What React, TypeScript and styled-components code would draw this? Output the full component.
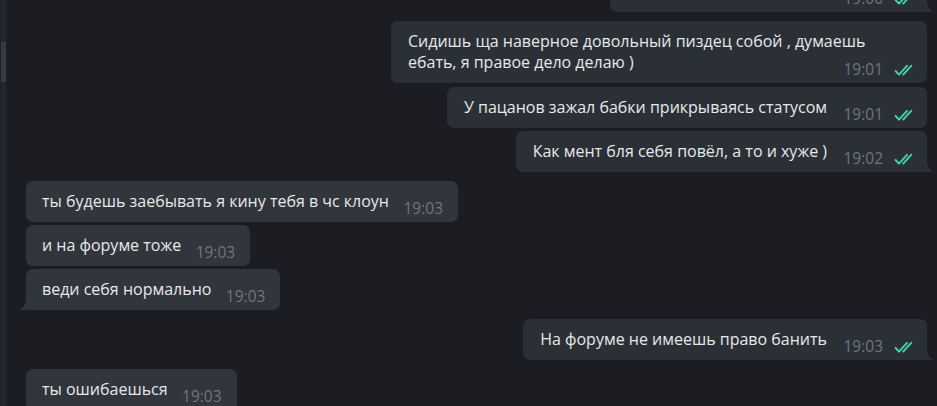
import styled, { createGlobalStyle } from "styled-components";

type Side = "in" | "out";

interface Message {
    side: Side;
    text: string;
    time: string;
    gap: number;
    tail?: boolean;
    minWidth?: number;
}

const messages: Message[] = [
    { side: "out", text: "", time: "19:00", gap: 0, tail: true, minWidth: 317 },
    {
        side: "out",
        text: "Сидишь ща наверное довольный пиздец собой , думаешь ебать, я правое дело делаю )",
        time: "19:01",
        gap: 9,
    },
    { side: "out", text: "У пацанов зажал бабки прикрываясь статусом", time: "19:01", gap: 4 },
    { side: "out", text: "Как мент бля себя повёл, а то и хуже )", time: "19:02", gap: 3, tail: true },
    { side: "in", text: "ты будешь заебывать я кину тебя в чс клоун", time: "19:03", gap: 9 },
    { side: "in", text: "и на форуме тоже", time: "19:03", gap: 3 },
    { side: "in", text: "веди себя нормально", time: "19:03", gap: 3, tail: true },
    { side: "out", text: "На форуме не имеешь право банить", time: "19:03", gap: 9, tail: true },
    { side: "in", text: "ты ошибаешься", time: "19:03", gap: 9 },
];

const bubbleBg = { in: "#31353c", out: "#2b3036" };

const GlobalStyle = createGlobalStyle`
    html, body {
        margin: 0;
        padding: 0;
        background: #1b1d22;
    }
    body {
        font-family: "Open Sans", "Noto Sans", sans-serif;
    }
`;

const Screen = styled.div`
    display: flex;
    width: 937px;
    height: 406px;
    overflow: hidden;
    background: #1b1d22;
`;

// strip of the chat list on the left
const Rail = styled.div`
    flex: 0 0 5px;
    display: flex;
    flex-direction: column;
    border-left: 1px solid #1c1f24;
    background: #22262d;
`;

const RailThumb = styled.div`
    margin-top: 42px;
    height: 40px;
    background: #353b46;
`;

const Feed = styled.div`
    flex: 1;
    display: flex;
    flex-direction: column;
    margin-top: -29px;
    padding: 0 10px 0 20px;
`;

const Row = styled.div<{ $side: Side; $gap: number }>`
    display: flex;
    justify-content: ${(p) => (p.$side === "out" ? "flex-end" : "flex-start")};
    margin-top: ${(p) => p.$gap}px;
`;

const Bubble = styled.div<{ $side: Side; $tail?: boolean; $minWidth?: number }>`
    position: relative;
    box-sizing: border-box;
    max-width: 536px;
    min-width: ${(p) => (p.$minWidth ? `${p.$minWidth}px` : "0")};
    padding: ${(p) => (p.$side === "out" ? "10px 12px 10px 17px" : "10px 15px 10px 16px")};
    border-radius: 7px;
    background: ${(p) => bubbleBg[p.$side]};
    color: #e7e8ea;
    font-size: 16px;
    line-height: 21px;
    ${(p) =>
        p.$tail &&
        (p.$side === "out" ? "border-bottom-right-radius: 0;" : "border-bottom-left-radius: 0;")}
`;

const Spacer = styled.span<{ $side: Side }>`
    display: inline-block;
    width: ${(p) => (p.$side === "out" ? "88px" : "54px")};
    height: 1px;
`;

const Meta = styled.div<{ $side: Side }>`
    position: absolute;
    right: ${(p) => (p.$side === "out" ? "11px" : "15px")};
    bottom: 4px;
    display: flex;
    align-items: center;
    gap: 11px;
    font-size: 15.5px;
    line-height: 20px;
    color: ${(p) => (p.$side === "out" ? "#6b7681" : "#70767e")};
`;

const Tail = styled.svg<{ $side: Side }>`
    position: absolute;
    bottom: 0;
    ${(p) => (p.$side === "out" ? "right: -8px;" : "left: -8px; transform: scaleX(-1);")}
    width: 8px;
    height: 12px;
    fill: ${(p) => bubbleBg[p.$side]};
`;

const Checks = styled.svg`
    width: 22px;
    height: 13px;
    margin-top: 2px;
    fill: none;
    stroke: #43d3ae;
    stroke-width: 1.9;
    stroke-linecap: round;
    stroke-linejoin: round;
`;

function DoubleCheck(): JSX.Element {
    return (
        <Checks viewBox="0 0 22 13">
            <path d="M1.6 7 L5 10.6 L13 1.8" />
            <path d="M9.2 10.6 L17.2 1.8" />
        </Checks>
    );
}

function ChatBubble({ msg }: { msg: Message }): JSX.Element {
    return (
        <Row $side={msg.side} $gap={msg.gap}>
            <Bubble $side={msg.side} $tail={msg.tail} $minWidth={msg.minWidth}>
                {msg.text}
                <Spacer $side={msg.side} />
                <Meta $side={msg.side}>
                    <span>{msg.time}</span>
                    {msg.side === "out" && <DoubleCheck />}
                </Meta>
                {msg.tail && (
                    <Tail $side={msg.side} viewBox="0 0 8 12">
                        <path d="M0 0 C0 7 3 11 8 12 L0 12 Z" />
                    </Tail>
                )}
            </Bubble>
        </Row>
    );
}

export default function App(): JSX.Element {
    return (
        <>
            <GlobalStyle />
            <Screen>
                <Rail>
                    <RailThumb />
                </Rail>
                <Feed>
                    {messages.map((m, i) => (
                        <ChatBubble key={i} msg={m} />
                    ))}
                </Feed>
            </Screen>
        </>
    );
}
